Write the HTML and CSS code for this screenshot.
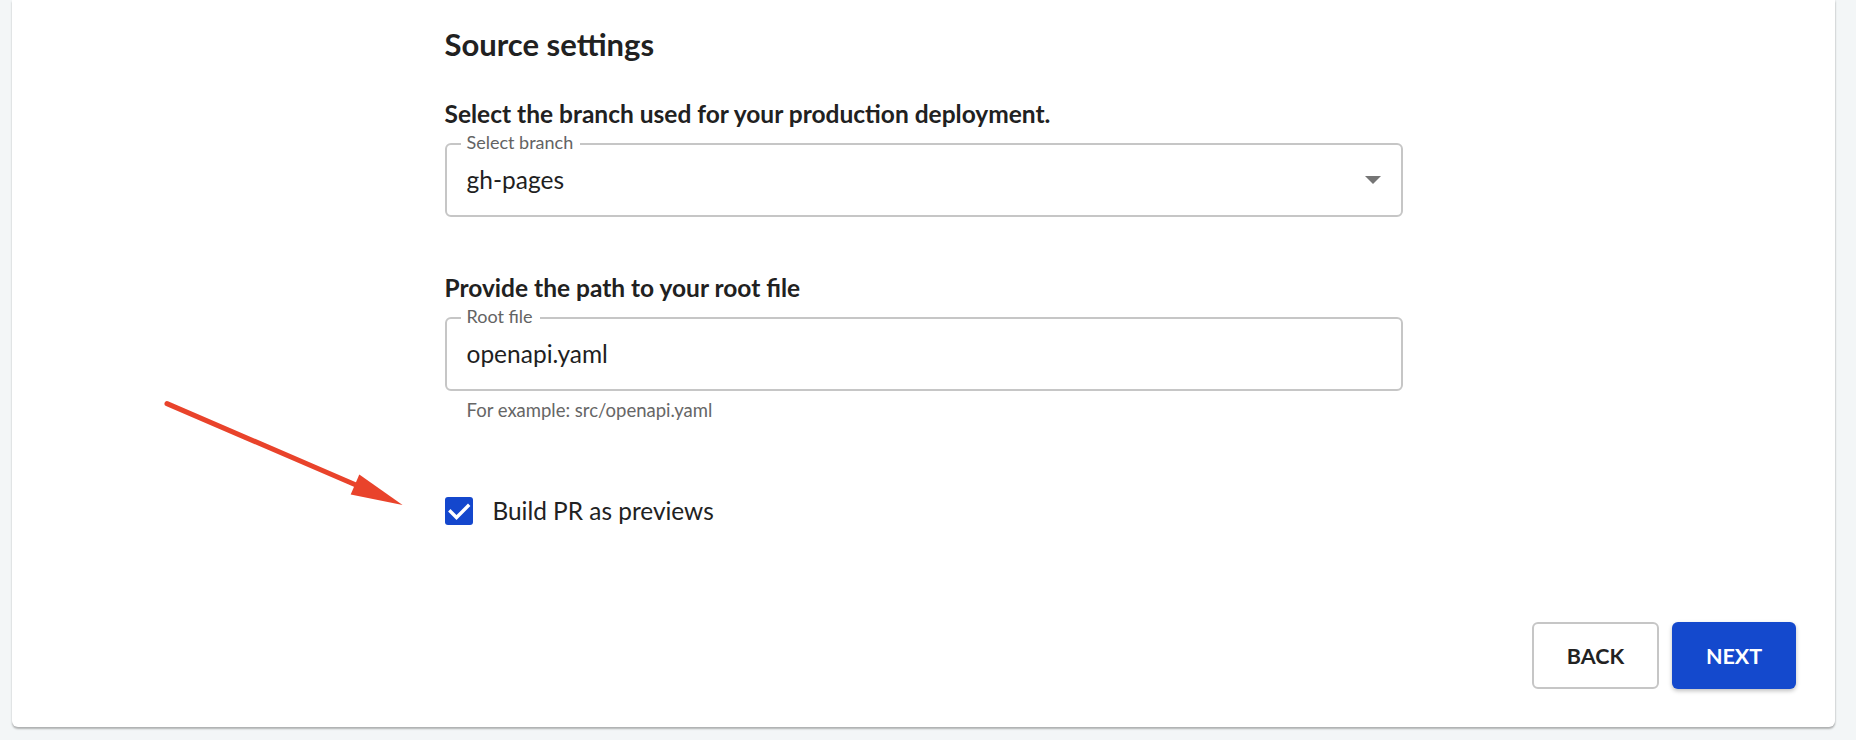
FILE: index.html
```html
<!DOCTYPE html>
<html lang="en">
<head>
  <meta charset="UTF-8">
  <meta name="viewport" content="width=device-width, initial-scale=1.0">
  <title>Source settings</title>
  <link rel="stylesheet" href="styles.css">
</head>
<body>
  <div class="card">
    <div class="form">
      <h2 class="form-title">Source settings</h2>

      <h3 class="field-title">Select the branch used for your production deployment.</h3>
      <div class="field">
        <span class="field-label">Select branch</span>
        <span class="field-value">gh-pages</span>
        <svg class="select-arrow" width="16" height="8" viewBox="0 0 16 8"><path d="M0 0h16L8 8z" fill="#757575"/></svg>
      </div>

      <h3 class="field-title field-title-spaced">Provide the path to your root file</h3>
      <div class="field">
        <span class="field-label">Root file</span>
        <span class="field-value">openapi.yaml</span>
      </div>
      <p class="helper">For example: src/openapi.yaml</p>

      <label class="checkbox-row">
        <svg class="checkbox" width="28" height="28" viewBox="0 0 28 28">
          <rect width="28" height="28" rx="3" fill="#1447cd"/>
          <path d="M5.5 14.5l6 6L23 9" fill="none" stroke="#fff" stroke-width="3.4" stroke-linecap="square"/>
        </svg>
        <span>Build PR as previews</span>
      </label>
    </div>

    <div class="actions">
      <button class="btn btn-back">BACK</button>
      <button class="btn btn-next">NEXT</button>
    </div>

    <!-- annotation arrow drawn over the page -->
    <svg class="annotation" width="270" height="130" viewBox="150 390 270 130">
      <line x1="167" y1="403.6" x2="356" y2="485" stroke="#e9432b" stroke-width="5" stroke-linecap="round"/>
      <path d="M402.6 505L350.7 494.5L359.3 474.5z" fill="#e9432b"/>
    </svg>
  </div>
</body>
</html>
```

FILE: styles.css
```css
body {
  margin: 0;
  background: #f3f6f7;
  font-family: 'Source Sans Pro', Lato, sans-serif;
  color: #212121;
  height: 740px;
  overflow: hidden;
}
.card {
  position: relative;
  margin: 0 21px 0 12px;
  padding: 24px 39px 38px;
  background: #fff;
  border-radius: 0 0 6px 6px;
  box-shadow: 0 2px 2px rgba(0,0,0,0.28), 1px 0 2px rgba(0,0,0,0.06);
}
.form {
  max-width: 958px;
  margin: 0 auto;
}
.form-title {
  font-size: 31px;
  line-height: 40px;
  font-weight: 700;
  margin: 0;
}
.field-title {
  font-size: 24.5px;
  line-height: 30px;
  font-weight: 700;
  margin: 35px 0 0;
}
.field-title-spaced {
  margin-top: 56px;
}
.field {
  position: relative;
  display: flex;
  align-items: center;
  height: 74px;
  box-sizing: border-box;
  margin-top: 14px;
  padding: 0 20px;
  border: 2px solid #c6c6c6;
  border-radius: 6px;
}
.field-label {
  position: absolute;
  top: -13px;
  left: 14px;
  padding: 0 7px 0 6px;
  background: #fff;
  font-size: 18px;
  line-height: 20px;
  color: #636363;
}
.field-value {
  font-size: 24.5px;
  line-height: 30px;
  color: #1f1f1f;
}
.select-arrow {
  margin-left: auto;
}
.helper {
  margin: 8px 0 0;
  padding-left: 22px;
  font-size: 18.5px;
  line-height: 22px;
  color: #666;
}
.checkbox-row {
  display: flex;
  align-items: center;
  gap: 20px;
  margin-top: 75px;
  font-size: 24.4px;
  line-height: 30px;
  color: #222;
  cursor: pointer;
}
.checkbox {
  display: block;
  flex: none;
}
.actions {
  display: flex;
  justify-content: flex-end;
  gap: 13px;
  margin-top: 96px;
}
.btn {
  height: 67px;
  box-sizing: border-box;
  border-radius: 6px;
  font-family: inherit;
  font-size: 21.5px;
  font-weight: 700;
  cursor: pointer;
}
.btn-back {
  width: 127px;
  background: #fff;
  color: #222;
  border: 2px solid #c6c6c6;
}
.btn-next {
  width: 124px;
  background: #1449cd;
  color: #fff;
  border: none;
  box-shadow: 0 2px 4px rgba(0,0,0,0.25);
}
.annotation {
  position: absolute;
  left: 138px;
  top: 390px;
}
```
